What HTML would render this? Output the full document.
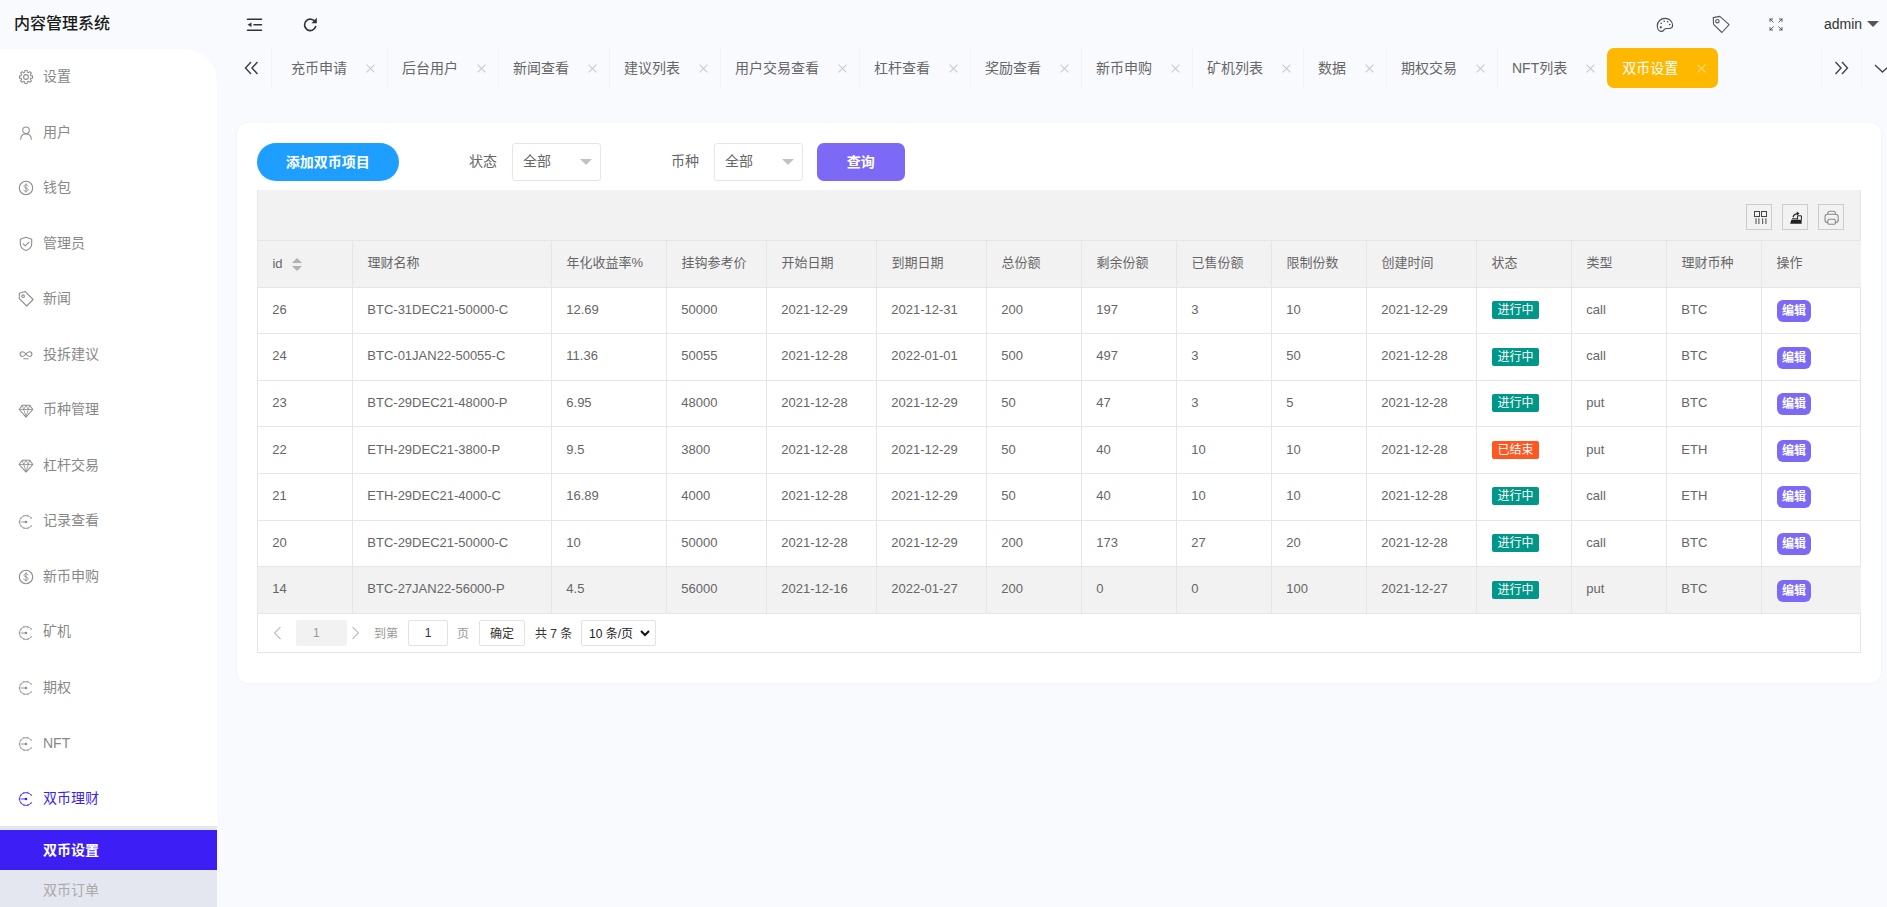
<!DOCTYPE html>
<html lang="zh-CN"><head><meta charset="utf-8"><title>内容管理系统</title>
<style>
*{box-sizing:border-box;margin:0;padding:0}
html,body{width:1887px;height:907px;overflow:hidden}
body{background:#f8fafe;font-family:"Liberation Sans","Noto Sans CJK SC",sans-serif;font-size:14px;color:#666;position:relative}
ul{list-style:none}
.logo{position:absolute;left:14px;top:0;height:48px;line-height:47px;font-size:16px;font-weight:500;color:#1a1a1a;-webkit-text-stroke:0}
.side{position:absolute;left:0;top:48.600px;width:217px;height:858.400px;background:#fff;border-top-right-radius:34px;overflow:hidden}
.menu{margin-top:-.6px}
.menu li{height:55.55px;line-height:55.55px;padding-left:18px;color:#888;font-size:14px;position:relative;white-space:nowrap}
.menu li .mi{position:absolute;left:17.600px;top:21.300px;color:#8e8e8e;width:16px;height:16px;overflow:visible}
.menu li span{position:absolute;left:43px;top:1px}
.menu li.on,.menu li.on .mi{color:#3d1ff5}
.sub{position:absolute;left:0;top:777.400px;width:217px;height:90px;background:#e4e6f0;padding-top:4px}
.si{height:40px;line-height:40px;padding-left:43px;color:#aaa;font-size:14px}
.si.act{background:#3d1ff5;color:#fff;font-weight:bold}
.hdr{position:absolute;left:217px;top:0;width:1670px;height:48px}
.hdr .hi{position:absolute}
.hdr .hi{margin-left:-217px}
.adm{position:absolute;left:1607px;top:1px;line-height:47px;font-size:14px;color:#333}
.caret{position:absolute;left:1649.500px;top:21px;border:6px solid transparent;border-top:6.500px solid #555;border-bottom:none}
.tabs{position:absolute;left:217px;top:48px;width:1670px;height:40px}
.tabs .tl{position:absolute;left:26.500px;top:13px}
.tabs ul{position:absolute;left:54px;top:0;height:40px;display:flex;white-space:nowrap}
.tabs li{height:40px;line-height:40px;padding:0 0 0 14px;font-size:14px;color:#666;border-left:1px solid #f2f3f8;position:relative;display:flex}
.tabs li:first-child{padding-left:19px}
.tabs li i{font-style:normal;width:40px;height:40px;display:block;position:relative}
.tabs li i:before,.tabs li i:after{content:"";position:absolute;left:17.5px;top:20px;width:11px;height:1px;background:#c8c8c8;transform:rotate(45deg)}
.tabs li i:after{transform:rotate(-45deg)}
.tabs li.act{background:#ffb800;color:#fff;border-radius:7px;border-left:none;padding-left:15px}
.tabs li.act i:before,.tabs li.act i:after{background:#ffdc80}
.tabs .tr{position:absolute;left:1604px;top:0;width:41px;height:40px;border-left:1px solid #f1f2f7;border-right:1px solid #f1f2f7}
.tabs .tr svg{position:absolute;left:12px;top:13px}
.tabs .td{position:absolute;left:1657px;top:15.500px}
.tabs .td svg{display:block}
.card{position:absolute;left:237px;top:123px;width:1644px;height:560px;background:#fff;border-radius:11px;box-shadow:0 0 3px rgba(0,0,0,.05)}
.btn-add{position:absolute;left:19.700px;top:19.700px;width:142px;height:38px;line-height:38px;border-radius:19px;background:#1e9fff;color:#fff;font-size:14px;font-weight:bold;text-align:center}
.lb{position:absolute;top:20px;line-height:36.600px;font-size:14px;color:#666}
.sel{position:absolute;top:20px;width:89px;height:38px;border:1px solid #e6e6e6;border-radius:3px;line-height:34.600px;padding-left:10px;font-size:14px;color:#666;background:#fff}
.sel b{position:absolute;right:8.500px;top:14.700px;border:6px solid transparent;border-top:6px solid #c2c2c2;border-bottom:none}
.btn-q{position:absolute;left:580px;top:19.700px;width:87.500px;height:38px;line-height:38px;border-radius:7px;background:#7c69f6;color:#fff;font-size:14px;font-weight:bold;text-align:center}
.tbl{position:absolute;left:20px;top:67px;width:1604px;border-left:1px solid #e6e6e6;border-right:1px solid #e6e6e6}
.tool{height:51px;background:#f2f2f2;position:relative;border-bottom:1px solid #e6e6e6}
.tb{position:absolute;top:14px;width:26px;height:26px;border:1px solid #ccc}
.tb svg{display:block}
table{border-collapse:separate;border-spacing:0;table-layout:fixed;width:1602px;font-size:13px;color:#666}
th,td{border-right:1px solid #e6e6e6;border-bottom:1px solid #e6e6e6;text-align:left;padding:0 15px;font-weight:normal;white-space:nowrap;overflow:hidden;height:46.6px}
tr>:last-child{border-right:none}
thead tr{background:#f2f2f2}
thead th{padding:0 15px 4px 14.400px}
tbody td{padding:0 15px 2px 14.300px}
tr.hov{background:#f2f2f2}
.sort{display:inline-block;position:relative;width:10px;height:14px;margin-left:9.500px;vertical-align:-4px;top:1.500px}
.sort i{position:absolute;left:0;border:5px solid transparent}
.sort .up{top:-4.500px;border-bottom:5.500px solid #b2b2b2}
.sort .dn{top:8.500px;border-top:5.500px solid #b2b2b2}
.badge{display:inline-block;height:18px;line-height:18px;padding:0 5.600px;position:relative;top:.6px;left:.7px;font-size:12px;color:#fff;border-radius:2px;vertical-align:middle}
.badge.g{background:#009688}
.badge.o{background:#ff5722}
.edit{display:inline-block;height:22px;line-height:22px;padding:0 5px;font-size:12px;font-weight:bold;color:#fff;background:#7c69f6;border-radius:6px;vertical-align:middle;position:relative;top:1.700px;left:.6px}
.page{height:39.2px;border-bottom:1px solid #e6e6e6;position:relative;font-size:12px}
.page>*{position:absolute}
.page .pp{top:12.500px}
.cur{left:38px;top:6.500px;width:51px;height:26px;line-height:26px;background:#f2f2f2;border-radius:2px;color:#999;text-align:left;padding-left:17px}
.pt{top:1px;line-height:39px}
.pin{left:150px;top:6.500px;width:40px;height:26px;line-height:25px;border:1px solid #e2e2e2;border-radius:2px;text-align:center;color:#333}
.pok{left:221px;top:6.500px;width:46px;height:26px;line-height:27px;border:1px solid #e2e2e2;border-radius:2px;text-align:center;color:#333}
.psel{left:323px;top:6.500px;width:75px;height:26px;border:1px solid #e2e2e2;border-radius:2px;line-height:26px;color:#222;padding-left:7px}
.psel svg{position:absolute;right:5px;top:9px}

</style></head><body>
<div class="logo">内容管理系统</div>
<div class="side"><ul class="menu">
<li><svg class="mi" viewBox="0 0 16 16" width="16" height="16" fill="none" stroke="currentColor" stroke-width="1.100" stroke-linecap="round" stroke-linejoin="round"><circle cx="8" cy="8" r="2.4"/><path stroke-linejoin="round" transform="translate(8 8) scale(.95) translate(-8 -8)" d="M6.55 3.01L6.80 1.10L9.20 1.10L9.45 3.01L10.51 3.44L12.03 2.27L13.73 3.97L12.56 5.49L12.99 6.55L14.90 6.80L14.90 9.20L12.99 9.45L12.56 10.51L13.73 12.03L12.03 13.73L10.51 12.56L9.45 12.99L9.20 14.90L6.80 14.90L6.55 12.99L5.49 12.56L3.97 13.73L2.27 12.03L3.44 10.51L3.01 9.45L1.10 9.20L1.10 6.80L3.01 6.55L3.44 5.49L2.27 3.97L3.97 2.27L5.49 3.44z"/></svg><span>设置</span></li>
<li><svg class="mi" viewBox="0 0 16 16" width="16" height="16" fill="none" stroke="currentColor" stroke-width="1.100" stroke-linecap="round" stroke-linejoin="round"><circle cx="8" cy="5.3" r="3.3"/><path d="M2.700 14.300c0-3.300 2.300-5.300 5.300-5.300s5.300 2 5.300 5.300"/></svg><span>用户</span></li>
<li><svg class="mi" viewBox="0 0 16 16" width="16" height="16" fill="none" stroke="currentColor" stroke-width="1.100" stroke-linecap="round" stroke-linejoin="round"><circle cx="8" cy="8" r="6.700"/><path d="M10 5.900c-.300-.700-1-1.100-2-1.100-1.200 0-2 .600-2 1.500 0 2.100 4.100 1.200 4.100 3.400 0 .900-.800 1.600-2.100 1.600-1.100 0-1.900-.500-2.200-1.300M8 3.700v8.600" stroke-width="0.9"/></svg><span>钱包</span></li>
<li><svg class="mi" viewBox="0 0 16 16" width="16" height="16" fill="none" stroke="currentColor" stroke-width="1.100" stroke-linecap="round" stroke-linejoin="round"><path d="M8 1.300l5.700 1.900v4.500c0 3.200-2.300 5.600-5.700 6.900-3.400-1.300-5.700-3.700-5.700-6.900V3.200z"/><path d="M5.200 7.800l2.100 2.100 3.700-3.700"/></svg><span>管理员</span></li>
<li><svg class="mi" viewBox="0 0 16 16" width="16" height="16" fill="none" stroke="currentColor" stroke-width="1.100" stroke-linecap="round" stroke-linejoin="round"><path d="M1.300 2.300L7 .4l8.100 8.100-6.400 6.500-7.400-7.400z"/><circle cx="5.100" cy="5.200" r="1.300"/></svg><span>新闻</span></li>
<li><svg class="mi" viewBox="0 0 16 16" width="16" height="16" fill="none" stroke="currentColor" stroke-width="1.100" stroke-linecap="round" stroke-linejoin="round"><path d="M8 7c-1.200-1.600-2.200-2.300-3.500-2.300a2.400 2.400 0 0 0 0 4.800C5.800 9.500 6.800 8.700 8 7s2.200-2.300 3.500-2.300a2.400 2.400 0 0 1 0 4.800C10.200 9.500 9.200 8.700 8 7z"/><path d="M5.800 11.800h4.400"/></svg><span>投拆建议</span></li>
<li><svg class="mi" viewBox="0 0 16 16" width="16" height="16" fill="none" stroke="currentColor" stroke-width="1.100" stroke-linecap="round" stroke-linejoin="round"><path d="M4.200 2.300h7.600l3 4.200-6.800 7.700-6.800-7.700z"/><path d="M1.400 6.500h13.200M5.700 6.500L8 13.500l2.300-7M4.200 2.300l1.500 4.200M11.800 2.300l-1.500 4.200M8 2.300L5.700 6.500M8 2.300l2.300 4.200" stroke-width="0.8"/></svg><span>币种管理</span></li>
<li><svg class="mi" viewBox="0 0 16 16" width="16" height="16" fill="none" stroke="currentColor" stroke-width="1.100" stroke-linecap="round" stroke-linejoin="round"><path d="M4.200 2.300h7.600l3 4.200-6.800 7.700-6.800-7.700z"/><path d="M1.400 6.500h13.200M5.700 6.500L8 13.500l2.300-7M4.200 2.300l1.500 4.200M11.800 2.300l-1.500 4.200M8 2.300L5.700 6.500M8 2.300l2.300 4.200" stroke-width="0.8"/></svg><span>杠杆交易</span></li>
<li><svg class="mi" viewBox="0 0 16 16" width="16" height="16" fill="none" stroke="currentColor" stroke-width="1.100" stroke-linecap="round" stroke-linejoin="round"><path d="M13.400 4.300A6.500 6.500 0 1 0 13.400 11.700" stroke-width=".9"/><path d="M13.400 4.300A6.500 6.500 0 1 0 13.400 11.700" stroke-width="2" stroke-dasharray="1.300 2.600" stroke-linecap="butt" opacity=".45"/><path d="M3.500 8H8" stroke-width=".9"/><circle cx="8" cy="8" r="1.300" fill="currentColor" stroke="none"/></svg><span>记录查看</span></li>
<li><svg class="mi" viewBox="0 0 16 16" width="16" height="16" fill="none" stroke="currentColor" stroke-width="1.100" stroke-linecap="round" stroke-linejoin="round"><circle cx="8" cy="8" r="6.700"/><path d="M10 5.900c-.300-.700-1-1.100-2-1.100-1.200 0-2 .600-2 1.500 0 2.100 4.100 1.200 4.100 3.400 0 .900-.800 1.600-2.100 1.600-1.100 0-1.900-.500-2.200-1.300M8 3.700v8.600" stroke-width="0.9"/></svg><span>新币申购</span></li>
<li><svg class="mi" viewBox="0 0 16 16" width="16" height="16" fill="none" stroke="currentColor" stroke-width="1.100" stroke-linecap="round" stroke-linejoin="round"><path d="M13.400 4.300A6.500 6.500 0 1 0 13.400 11.700" stroke-width=".9"/><path d="M13.400 4.300A6.500 6.500 0 1 0 13.400 11.700" stroke-width="2" stroke-dasharray="1.300 2.600" stroke-linecap="butt" opacity=".45"/><path d="M3.500 8H8" stroke-width=".9"/><circle cx="8" cy="8" r="1.300" fill="currentColor" stroke="none"/></svg><span>矿机</span></li>
<li><svg class="mi" viewBox="0 0 16 16" width="16" height="16" fill="none" stroke="currentColor" stroke-width="1.100" stroke-linecap="round" stroke-linejoin="round"><path d="M13.400 4.300A6.500 6.500 0 1 0 13.400 11.700" stroke-width=".9"/><path d="M13.400 4.300A6.500 6.500 0 1 0 13.400 11.700" stroke-width="2" stroke-dasharray="1.300 2.600" stroke-linecap="butt" opacity=".45"/><path d="M3.500 8H8" stroke-width=".9"/><circle cx="8" cy="8" r="1.300" fill="currentColor" stroke="none"/></svg><span>期权</span></li>
<li><svg class="mi" viewBox="0 0 16 16" width="16" height="16" fill="none" stroke="currentColor" stroke-width="1.100" stroke-linecap="round" stroke-linejoin="round"><path d="M13.400 4.300A6.500 6.500 0 1 0 13.400 11.700" stroke-width=".9"/><path d="M13.400 4.300A6.500 6.500 0 1 0 13.400 11.700" stroke-width="2" stroke-dasharray="1.300 2.600" stroke-linecap="butt" opacity=".45"/><path d="M3.500 8H8" stroke-width=".9"/><circle cx="8" cy="8" r="1.300" fill="currentColor" stroke="none"/></svg><span>NFT</span></li>
<li class="on"><svg class="mi" viewBox="0 0 16 16" width="16" height="16" fill="none" stroke="currentColor" stroke-width="1.100" stroke-linecap="round" stroke-linejoin="round"><path d="M13.400 4.300A6.500 6.500 0 1 0 13.400 11.700" stroke-width=".9"/><path d="M13.400 4.300A6.500 6.500 0 1 0 13.400 11.700" stroke-width="2" stroke-dasharray="1.300 2.600" stroke-linecap="butt" opacity=".45"/><path d="M3.500 8H8" stroke-width=".9"/><circle cx="8" cy="8" r="1.300" fill="currentColor" stroke="none"/></svg><span>双币理财</span></li>
</ul><div class="sub"><div class="si act">双币设置</div><div class="si">双币订单</div></div></div>
<div class="hdr">
<svg class="hi" style="left:246px;top:17px" width="17" height="16" viewBox="0 0 17 16"><path d="M1.500 2.200h14M8 7.700h7.500M1.500 13.200h14" stroke="#333" stroke-width="1.600" stroke-linecap="round" fill="none"/><path d="M1.500 7.700l4-2.200v4.400z" fill="#333"/></svg>
<svg class="hi" style="left:302px;top:16px" width="17" height="17" viewBox="0 0 17 17"><path d="M13.300 6.200A5.700 5.700 0 1 0 13.700 10.600" stroke="#333" stroke-width="1.700" fill="none" stroke-linecap="round"/><path d="M14.800 1.800v5.400H9.400z" fill="#333"/></svg>
<svg class="hi" style="left:1656px;top:17px" width="18" height="16" viewBox="0 0 18 16" fill="none" stroke="#4a4a4a" stroke-width="1.150" stroke-linejoin="round"><path d="M9.200 1.300C4.800 1.300 1.300 4.600 1.300 8.800c0 3.300 1.800 5.600 4 5.600 1.900 0 2.400-1.300 3.200-2.200.900-1 2.300-.700 4.300-.700 2.300 0 3.800-.900 3.800-3.200 0-4-3.300-7-7.400-7z"/><circle cx="4.800" cy="10.300" r="1.100" fill="#444" stroke="none"/><circle cx="5.200" cy="6.300" r=".8" fill="#444" stroke="none"/><circle cx="8.200" cy="4.200" r=".8" fill="#444" stroke="none"/><circle cx="11.700" cy="4.800" r=".8" fill="#444" stroke="none"/><circle cx="13.700" cy="7.600" r=".8" fill="#444" stroke="none"/></svg>
<svg class="hi" style="left:1711px;top:15px" width="20" height="19" viewBox="0 0 20 19" fill="none" stroke="#555" stroke-width="1.100" stroke-linejoin="round"><path d="M2.200 2.600l6.600-1.200 9.300 8.300-7.200 7.800-8.300-8.200z"/><circle cx="6.400" cy="6.200" r="1.700"/></svg>
<svg class="hi" style="left:1769px;top:18px" width="14" height="13" viewBox="0 0 14 13" fill="none" stroke="#555" stroke-width=".95" stroke-linecap="round"><path d="M1 1l3.300 3.200M1 3.500V1h2.600M13 1L9.700 4.200M10.400 1H13v2.500M1 12l3.300-3.200M1 9.500V12h2.600M13 12L9.700 8.800M13 9.500V12h-2.600"/></svg>
<span class="adm">admin</span><span class="caret"></span>
</div>
<div class="tabs"><svg class="tl" width="15" height="14" viewBox="0 0 15 14" fill="none" stroke="#444" stroke-width="1.500"><path d="M7 1L1.500 7 7 13M13.500 1L8 7l5.500 6"/></svg><ul>
<li><span>充币申请</span><i></i></li>
<li><span>后台用户</span><i></i></li>
<li><span>新闻查看</span><i></i></li>
<li><span>建议列表</span><i></i></li>
<li><span>用户交易查看</span><i></i></li>
<li><span>杠杆查看</span><i></i></li>
<li><span>奖励查看</span><i></i></li>
<li><span>新币申购</span><i></i></li>
<li><span>矿机列表</span><i></i></li>
<li><span>数据</span><i></i></li>
<li><span>期权交易</span><i></i></li>
<li><span>NFT列表</span><i></i></li>
<li class="act"><span>双币设置</span><i></i></li>
</ul><div class="tr"><svg width="15" height="14" viewBox="0 0 15 14" fill="none" stroke="#444" stroke-width="1.400"><path d="M1.500 1l5.500 6-5.500 6M8 1l5.500 6L8 13"/></svg></div><div class="td"><svg width="18" height="9" viewBox="0 0 18 9" fill="none" stroke="#444" stroke-width="1.300"><path d="M1 1l7.500 7L16 1"/></svg></div></div>
<div class="card">
<div class="btn-add">添加双币项目</div>
<label class="lb" style="left:232px">状态</label><div class="sel" style="left:275px"><span>全部</span><b></b></div>
<label class="lb" style="left:434px">币种</label><div class="sel" style="left:477px"><span>全部</span><b></b></div>
<div class="btn-q">查询</div>
<div class="tbl">
<div class="tool">
<div class="tb" style="left:1488px"><svg width="24" height="24" viewBox="1 1 24 24" fill="none" stroke="#444" stroke-width="1"><rect x="8.500" y="7.500" width="5" height="5"/><rect x="15.500" y="7.500" width="5" height="5"/><path d="M10 14.300v5.700M12.900 14.300v5.700M16.600 14.300v5.700M19.900 14.300v5.700" stroke="#666" stroke-width="1.200"/></svg></div>
<div class="tb" style="left:1524px"><svg width="24" height="24" viewBox="1 1 24 24"><path d="M9.300 15.700h10.300v4H8.200z" fill="#222"/><path d="M15.600 15.500v-3.700h3.800v4" fill="none" stroke="#222" stroke-width="1"/><path d="M11.200 13.300c.2-2.100 1.700-3.400 4.300-3.600" fill="none" stroke="#222" stroke-width="1.300"/><path d="M14.800 7.400l2.700 2.200-2.700 2.200z" fill="#222"/><path d="M10 14.800h5.500" stroke="#222" stroke-width="1"/></svg></div>
<div class="tb" style="left:1560px"><svg width="24" height="24" viewBox="1 1 24 24" fill="none" stroke="#8a8a8a" stroke-width="1.100"><rect x="7" y="10.300" width="13.200" height="8.300" rx="2.600"/><path d="M9.800 10.300V9.300a2 2 0 0 1 2-2h3.600a2 2 0 0 1 2 2v1"/><rect x="9.800" y="15.300" width="7.600" height="5" rx="1.200" fill="#f2f2f2"/></svg></div>
</div>
<table><colgroup><col style="width:95px"><col style="width:199px"><col style="width:115px"><col style="width:100px"><col style="width:110px"><col style="width:110px"><col style="width:95px"><col style="width:95px"><col style="width:95px"><col style="width:95px"><col style="width:110px"><col style="width:95px"><col style="width:95px"><col style="width:95px"><col style="width:99px"></colgroup><thead><tr>
<th><span style="position:relative;top:2px">id</span><span class="sort"><i class="up"></i><i class="dn"></i></span></th>
<th>理财名称</th>
<th>年化收益率%</th>
<th>挂钩参考价</th>
<th>开始日期</th>
<th>到期日期</th>
<th>总份额</th>
<th>剩余份额</th>
<th>已售份额</th>
<th>限制份数</th>
<th>创建时间</th>
<th>状态</th>
<th>类型</th>
<th>理财币种</th>
<th>操作</th>
</tr></thead><tbody>
<tr>
<td>26</td>
<td>BTC-31DEC21-50000-C</td>
<td>12.69</td>
<td>50000</td>
<td>2021-12-29</td>
<td>2021-12-31</td>
<td>200</td>
<td>197</td>
<td>3</td>
<td>10</td>
<td>2021-12-29</td>
<td><span class="badge g">进行中</span></td>
<td>call</td>
<td>BTC</td>
<td><span class="edit">编辑</span></td></tr>
<tr>
<td>24</td>
<td>BTC-01JAN22-50055-C</td>
<td>11.36</td>
<td>50055</td>
<td>2021-12-28</td>
<td>2022-01-01</td>
<td>500</td>
<td>497</td>
<td>3</td>
<td>50</td>
<td>2021-12-28</td>
<td><span class="badge g">进行中</span></td>
<td>call</td>
<td>BTC</td>
<td><span class="edit">编辑</span></td></tr>
<tr>
<td>23</td>
<td>BTC-29DEC21-48000-P</td>
<td>6.95</td>
<td>48000</td>
<td>2021-12-28</td>
<td>2021-12-29</td>
<td>50</td>
<td>47</td>
<td>3</td>
<td>5</td>
<td>2021-12-28</td>
<td><span class="badge g">进行中</span></td>
<td>put</td>
<td>BTC</td>
<td><span class="edit">编辑</span></td></tr>
<tr>
<td>22</td>
<td>ETH-29DEC21-3800-P</td>
<td>9.5</td>
<td>3800</td>
<td>2021-12-28</td>
<td>2021-12-29</td>
<td>50</td>
<td>40</td>
<td>10</td>
<td>10</td>
<td>2021-12-28</td>
<td><span class="badge o">已结束</span></td>
<td>put</td>
<td>ETH</td>
<td><span class="edit">编辑</span></td></tr>
<tr>
<td>21</td>
<td>ETH-29DEC21-4000-C</td>
<td>16.89</td>
<td>4000</td>
<td>2021-12-28</td>
<td>2021-12-29</td>
<td>50</td>
<td>40</td>
<td>10</td>
<td>10</td>
<td>2021-12-28</td>
<td><span class="badge g">进行中</span></td>
<td>call</td>
<td>ETH</td>
<td><span class="edit">编辑</span></td></tr>
<tr>
<td>20</td>
<td>BTC-29DEC21-50000-C</td>
<td>10</td>
<td>50000</td>
<td>2021-12-28</td>
<td>2021-12-29</td>
<td>200</td>
<td>173</td>
<td>27</td>
<td>20</td>
<td>2021-12-28</td>
<td><span class="badge g">进行中</span></td>
<td>call</td>
<td>BTC</td>
<td><span class="edit">编辑</span></td></tr>
<tr class="hov">
<td>14</td>
<td>BTC-27JAN22-56000-P</td>
<td>4.5</td>
<td>56000</td>
<td>2021-12-16</td>
<td>2022-01-27</td>
<td>200</td>
<td>0</td>
<td>0</td>
<td>100</td>
<td>2021-12-27</td>
<td><span class="badge g">进行中</span></td>
<td>put</td>
<td>BTC</td>
<td><span class="edit">编辑</span></td></tr>
</tbody></table>
<div class="page">
<svg class="pp" style="left:15px" width="9" height="14" viewBox="0 0 9 14" fill="none" stroke="#c2c2c2" stroke-width="1.200"><path d="M7.500 1L1.500 7l6 6"/></svg>
<span class="cur">1</span>
<svg class="pp" style="left:93px" width="9" height="14" viewBox="0 0 9 14" fill="none" stroke="#c2c2c2" stroke-width="1.200"><path d="M1.500 1l6 6-6 6"/></svg>
<span class="pt" style="left:116px;color:#999">到第</span><span class="pin">1</span><span class="pt" style="left:199px;color:#999">页</span><span class="pok">确定</span><span class="pt" style="left:277px;color:#333">共 7 条</span>
<span class="psel"><span>10 条/页</span><svg width="10" height="7" viewBox="0 0 10 7" fill="none" stroke="#111" stroke-width="2"><path d="M1 1l4 4 4-4"/></svg></span>
</div>
</div></div>
</body></html>
